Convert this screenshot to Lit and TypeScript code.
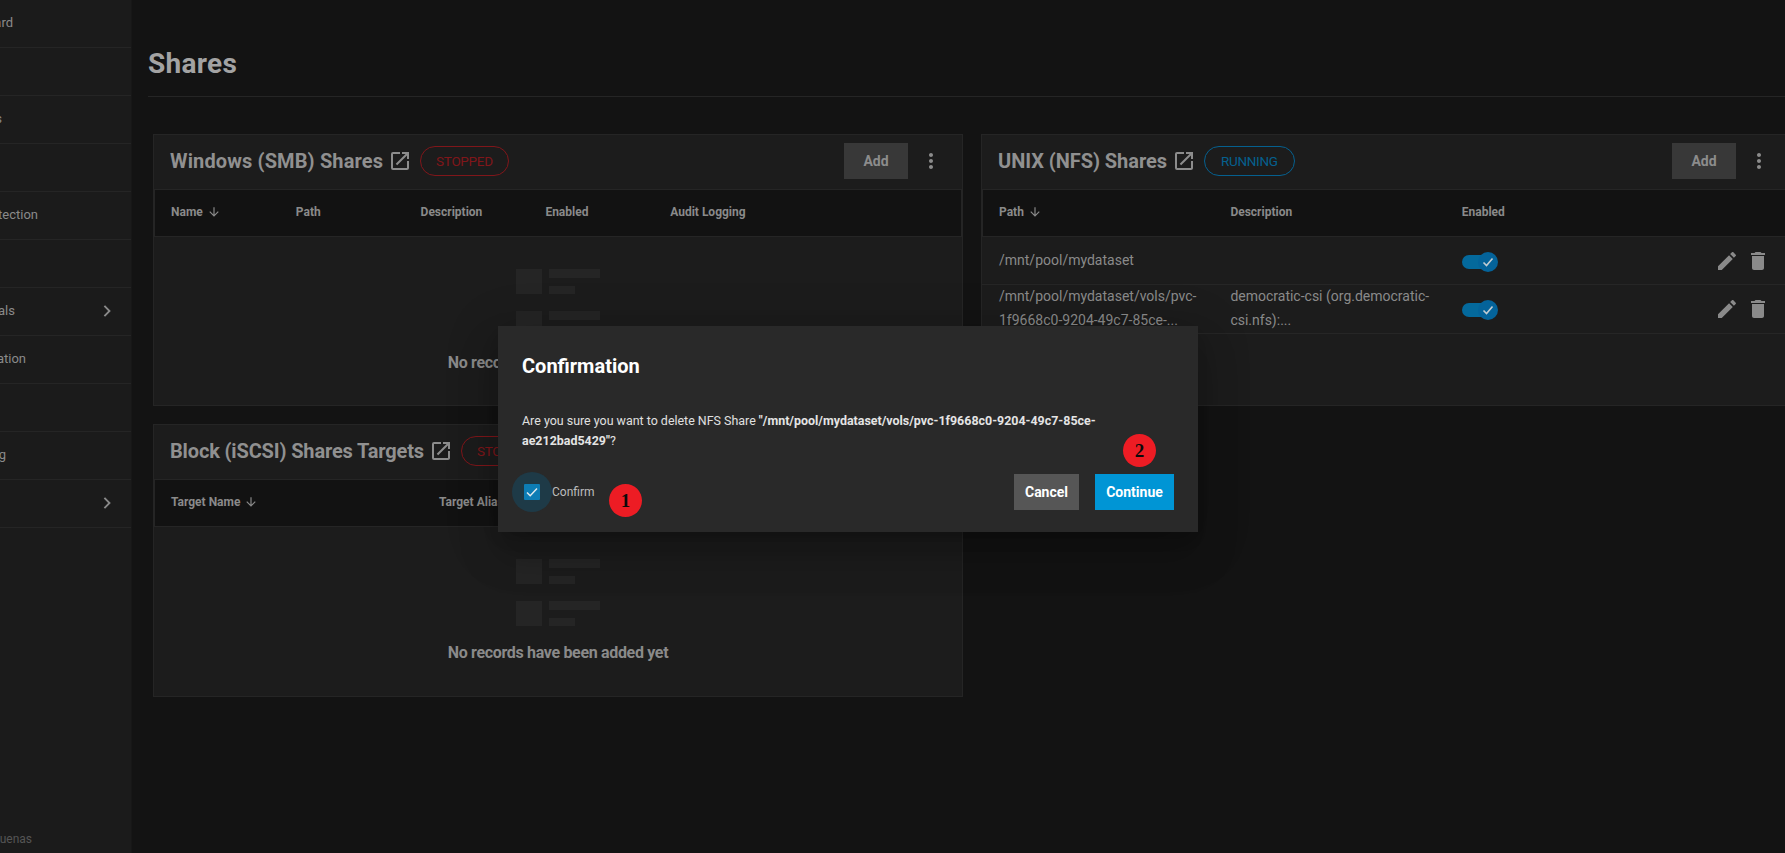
import { LitElement, html, css, svg } from "lit";
import { customElement, property } from "lit/decorators.js";

const icon = (d: unknown, cls = "") =>
  html`<svg class=${cls} viewBox="0 0 24 24" width="24" height="24">${d}</svg>`;

const openNew = svg`<path d="M19 19H5V5h7V3H5a2 2 0 0 0-2 2v14a2 2 0 0 0 2 2h14c1.1 0 2-.9 2-2v-7h-2v7zM14 3v2h3.59l-9.83 9.83 1.41 1.41L19 6.41V10h2V3h-7z"/>`;
const dots = svg`<path d="M12 8c1.1 0 2-.9 2-2s-.9-2-2-2-2 .9-2 2 .9 2 2 2zm0 2c-1.1 0-2 .9-2 2s.9 2 2 2 2-.9 2-2-.9-2-2-2zm0 6c-1.1 0-2 .9-2 2s.9 2 2 2 2-.9 2-2-.9-2-2-2z"/>`;
const pencil = svg`<path d="M3 17.25V21h3.75L17.81 9.94l-3.75-3.75L3 17.25zM20.71 7.04c.39-.39.39-1.02 0-1.41l-2.34-2.34c-.39-.39-1.02-.39-1.41 0l-1.83 1.83 3.75 3.75 1.83-1.83z"/>`;
const trash = svg`<path d="M6 19c0 1.1.9 2 2 2h8c1.1 0 2-.9 2-2V7H6v12zM19 4h-3.5l-1-1h-5l-1 1H5v2h14V4z"/>`;
const arrowDown = svg`<path d="M20 12l-1.41-1.41L13 16.17V4h-2v12.17l-5.58-5.59L4 12l8 8 8-8z"/>`;
const chevron = svg`<path d="M8.6 5.4 10.6 3.4 19.2 12l-8.6 8.6-2-2 6.6-6.6z"/>`;

interface Share {
  path: string;
  description: string;
}

@customElement("share-card")
export class ShareCard extends LitElement {
  @property({ type: String }) heading = "";
  @property({ type: String }) status = "";
  @property({ type: Number }) colWidth = 125;
  @property({ type: Array }) columns: string[] = [];
  @property({ type: Array }) rows: Share[] = [];

  static styles = css`
    :host {
      display: block;
      box-sizing: border-box;
      background: #1c1c1c;
      border: 1px solid #252525;
      font-family: Roboto, sans-serif;
    }
    .card__head {
      display: flex;
      align-items: center;
      height: 52px;
      padding: 0 19px 0 16px;
    }
    .card__title {
      font-size: 20px;
      font-weight: 700;
      letter-spacing: var(--title-track, 0);
      color: #909090;
      white-space: nowrap;
    }
    .card__link {
      fill: #8c8c8c;
      margin-left: 5px;
      flex: none;
    }
    .pill {
      margin-left: 8px;
      height: 30px;
      box-sizing: border-box;
      display: flex;
      align-items: center;
      border-radius: 15px;
      border: 1px solid;
      font-size: 13.5px;
      letter-spacing: -0.3px;
      white-space: nowrap;
    }
    .pill--stopped {
      padding: 0 15px;
      color: #80161a;
      border-color: #80161a;
    }
    .pill--running {
      padding: 0 16px;
      color: #05608f;
      border-color: #05608f;
    }
    .card__add {
      margin-left: auto;
      width: 64px;
      height: 36px;
      display: flex;
      align-items: center;
      justify-content: center;
      background: #383838;
      color: #8c8c8c;
      font-size: 14px;
      font-weight: 700;
    }
    .card__more {
      fill: #8c8c8c;
      margin-left: 11px;
    }
    .table__head,
    .table__row {
      display: grid;
      box-sizing: border-box;
    }
    .table__head {
      margin-top: 2px;
      height: 48px;
      padding: 0 0 2px 16px;
      align-items: center;
      background: #121212;
      border: 1px solid #252525;
      color: #8a8a8a;
      font-size: 12px;
      font-weight: 700;
    }
    .table__col {
      display: flex;
      align-items: center;
      gap: 4px;
    }
    .table__sort {
      width: 14px;
      height: 14px;
      fill: #8a8a8a;
    }
    .table__row {
      padding: 0 20px 0 17px;
      min-height: 48px;
      align-items: center;
      border-bottom: 1px solid #262626;
      color: #8a8a8a;
      font-size: 14px;
      line-height: 24px;
    }
    .table__cell {
      margin: -1px 0 1px;
      padding-right: 16px;
    }
    .toggle {
      position: relative;
      width: 28px;
      height: 14px;
      margin-top: 2px;
      border-radius: 7px;
      background: #04699c;
    }
    .toggle__thumb {
      position: absolute;
      left: 16px;
      top: -3px;
      width: 20px;
      height: 20px;
      border-radius: 50%;
      background: #04639a;
      stroke: #c2ccd2;
      stroke-width: 1.6;
      fill: none;
    }
    .table__actions {
      display: flex;
      justify-content: flex-end;
      gap: 7px;
      fill: #8a8a8a;
    }
    .empty {
      display: flex;
      flex-direction: column;
      align-items: center;
      padding-top: 32px;
    }
    .empty__row {
      display: flex;
      gap: 7px;
      margin-bottom: 17px;
    }
    .empty__block {
      width: 26px;
      height: 25px;
      background: #252525;
    }
    .empty__bars {
      display: flex;
      flex-direction: column;
      justify-content: space-between;
    }
    .empty__bar {
      width: 51px;
      height: 9px;
      background: #252525;
    }
    .empty__bar--short {
      width: 26px;
      height: 8px;
    }
    .empty__text {
      font-size: 16px;
      line-height: 20px;
      font-weight: 700;
      letter-spacing: -0.33px;
      color: #8a8a8a;
    }
  `;

  private renderEmpty() {
    const row = html`<div class="empty__row">
      <div class="empty__block"></div>
      <div class="empty__bars">
        <div class="empty__bar"></div>
        <div class="empty__bar empty__bar--short"></div>
      </div>
    </div>`;
    return html`<div class="empty">
      ${row}${row}
      <div class="empty__text">No records have been added yet</div>
    </div>`;
  }

  render() {
    const cols = `repeat(${this.columns.length}, ${this.colWidth}px) 1fr`;
    return html`
      <div class="card__head">
        <span class="card__title">${this.heading}</span>
        ${icon(openNew, "card__link")}
        <span class="pill pill--${this.status.toLowerCase()}">${this.status}</span>
        <div class="card__add">Add</div>
        ${icon(dots, "card__more")}
      </div>
      <div class="table__head" style="grid-template-columns:${cols}">
        ${this.columns.map(
          (c, i) => html`<div class="table__col">
            ${c} ${i === 0 ? icon(arrowDown, "table__sort") : null}
          </div>`
        )}
      </div>
      ${this.rows.length
        ? this.rows.map(
            (r) => html`<div class="table__row" style="grid-template-columns:${cols}">
              <div class="table__cell">${r.path}</div>
              <div class="table__cell">${r.description}</div>
              <div class="toggle">
                <svg class="toggle__thumb" viewBox="0 0 20 20"><path d="M5.5 10.5l3 3 6-7"/></svg>
              </div>
              <div class="table__actions">${icon(pencil)}${icon(trash)}</div>
            </div>`
          )
        : this.renderEmpty()}
    `;
  }
}

@customElement("app-root")
export class AppRoot extends LitElement {
  static styles = css`
    :host {
      display: flex;
      width: 100vw;
      height: 100vh;
      position: relative;
      overflow: hidden;
      background: #131313;
      font-family: Roboto, sans-serif;
    }
    .nav {
      flex: none;
      width: 132px;
      box-sizing: border-box;
      display: flex;
      flex-direction: column;
      background: #1b1b1b;
      border-right: 1px solid #171717;
    }
    .nav__row {
      display: flex;
      align-items: center;
      height: 48px;
      box-sizing: border-box;
      padding-bottom: 2px;
      border-bottom: 1px solid #252525;
      color: #8a8a8a;
      font-size: 13px;
      white-space: nowrap;
    }
    .nav__label {
      display: flex;
      justify-content: flex-end;
    }
    .nav__arrow {
      margin-left: auto;
      margin-right: 17px;
      width: 16px;
      height: 16px;
      fill: #8a8a8a;
    }
    .nav__foot {
      margin-top: auto;
      height: 21px;
      color: #555;
      font-size: 12px;
      white-space: nowrap;
    }
    .main {
      flex: 1;
      min-width: 0;
    }
    .page-head {
      height: 97px;
      box-sizing: border-box;
      margin-left: 16px;
      padding-top: 46px;
      border-bottom: 1px solid #252525;
    }
    .page-head__title {
      margin: 0;
      font-size: 28px;
      line-height: 36px;
      font-weight: 700;
      letter-spacing: 0.3px;
      color: #a3a3a3;
    }
    .grid {
      display: grid;
      grid-template-columns: 810px 810px;
      column-gap: 18px;
      margin: 37px 0 0 21px;
    }
    .grid__col {
      display: flex;
      flex-direction: column;
      gap: 18px;
    }
    .card--smb {
      height: 272px;
      --title-track: 0.13px;
    }
    .card--nfs {
      height: 272px;
      --title-track: -0.05px;
    }
    .card--iscsi {
      height: 273px;
      --title-track: -0.15px;
    }
    .modal {
      position: absolute;
      left: 498px;
      top: 326px;
      width: 700px;
      height: 206px;
      box-sizing: border-box;
      padding: 24px;
      background: #292929;
      box-shadow: 0 11px 15px -7px rgba(0, 0, 0, 0.2),
        0 24px 38px 3px rgba(0, 0, 0, 0.14), 0 9px 46px 8px rgba(0, 0, 0, 0.12);
    }
    .modal__title {
      margin: 0;
      font-size: 20px;
      line-height: 32px;
      font-weight: 700;
      color: #fff;
    }
    .modal__body {
      margin-top: 29px;
      max-width: 600px;
      font-size: 12.45px;
      line-height: 20px;
      color: #e0e0e0;
    }
    .modal__body b {
      color: #e4e4e4;
    }
    .modal__actions {
      display: flex;
      align-items: center;
      margin-top: 23px;
      height: 36px;
    }
    .check {
      display: flex;
      align-items: center;
      margin-left: -10px;
      color: #bdbdbd;
      font-size: 12px;
    }
    .check__ripple {
      width: 40px;
      height: 40px;
      border-radius: 50%;
      background: #1e3a47;
      display: flex;
      align-items: center;
      justify-content: center;
    }
    .check__box {
      width: 16px;
      height: 16px;
      border-radius: 1px;
      background: #0d7db5;
      fill: none;
      stroke: #dfe9ee;
      stroke-width: 1.5;
    }
    .btn {
      height: 36px;
      display: flex;
      align-items: center;
      justify-content: center;
      font-size: 14px;
      font-weight: 700;
      color: #fff;
    }
    .btn--cancel {
      margin-left: auto;
      width: 65px;
      background: #565656;
    }
    .btn--continue {
      margin-left: 16px;
      width: 79px;
      background: #0095d5;
    }
    .marker {
      position: absolute;
      width: 33px;
      height: 33px;
      border-radius: 50%;
      background: #ed1c24;
      color: #0a0a0a;
      font-family: "Liberation Serif", serif;
      font-size: 19px;
      font-weight: 700;
      display: flex;
      align-items: center;
      justify-content: center;
    }
    .marker--one {
      left: 111px;
      top: 158px;
    }
    .marker--two {
      left: 625px;
      top: 108px;
    }
  `;

  // end = how far each label reaches into the visible part of the rail
  private nav = [
    { label: "Dashboard", end: 13 },
    { label: "Storage", end: 0 },
    { label: "Datasets", end: 2 },
    { label: "Shares", end: 0 },
    { label: "Data Protection", end: 38 },
    { label: "Network", end: 0 },
    { label: "Credentials", end: 15, more: true },
    { label: "Virtualization", end: 26 },
    { label: "Apps", end: 0 },
    { label: "Reporting", end: 6 },
    { label: "System", end: 0, more: true },
  ];

  private nfsRows: Share[] = [
    { path: "/mnt/pool/mydataset", description: "" },
    {
      path: "/mnt/pool/mydataset/vols/pvc-1f9668c0-9204-49c7-85ce-...",
      description: "democratic-csi (org.democratic-csi.nfs):...",
    },
  ];

  render() {
    return html`
      <nav class="nav">
        ${this.nav.map(
          (n) => html`<div class="nav__row">
            <span class="nav__label" style="width:${n.end}px">
              ${n.end ? n.label : ""}
            </span>
            ${n.more ? icon(chevron, "nav__arrow") : null}
          </div>`
        )}
        <div class="nav__foot">
          <span class="nav__label" style="width:32px">truenas</span>
        </div>
      </nav>
      <main class="main">
        <header class="page-head"><h1 class="page-head__title">Shares</h1></header>
        <div class="grid">
          <div class="grid__col">
            <share-card
              class="card--smb"
              heading="Windows (SMB) Shares"
              status="STOPPED"
              colWidth="124.8"
              .columns=${["Name", "Path", "Description", "Enabled", "Audit Logging"]}
            ></share-card>
            <share-card
              class="card--iscsi"
              heading="Block (iSCSI) Shares Targets"
              status="STOPPED"
              colWidth="268"
              .columns=${["Target Name", "Target Alias"]}
            ></share-card>
          </div>
          <div class="grid__col">
            <share-card
              class="card--nfs"
              heading="UNIX (NFS) Shares"
              status="RUNNING"
              colWidth="231.4"
              .columns=${["Path", "Description", "Enabled"]}
              .rows=${this.nfsRows}
            ></share-card>
          </div>
        </div>
      </main>
      <section class="modal">
        <h2 class="modal__title">Confirmation</h2>
        <div class="modal__body">
          Are you sure you want to delete NFS Share
          <b>"/mnt/pool/mydataset/vols/pvc-1f9668c0-9204-49c7-85ce-ae212bad5429"</b>?
        </div>
        <div class="modal__actions">
          <div class="check">
            <div class="check__ripple">
              <svg class="check__box" viewBox="0 0 16 16"><path d="M3 8.5l3.2 3.2L13 4.5"/></svg>
            </div>
            Confirm
          </div>
          <div class="btn btn--cancel">Cancel</div>
          <div class="btn btn--continue">Continue</div>
        </div>
        <div class="marker marker--one">1</div>
        <div class="marker marker--two">2</div>
      </section>
    `;
  }
}
